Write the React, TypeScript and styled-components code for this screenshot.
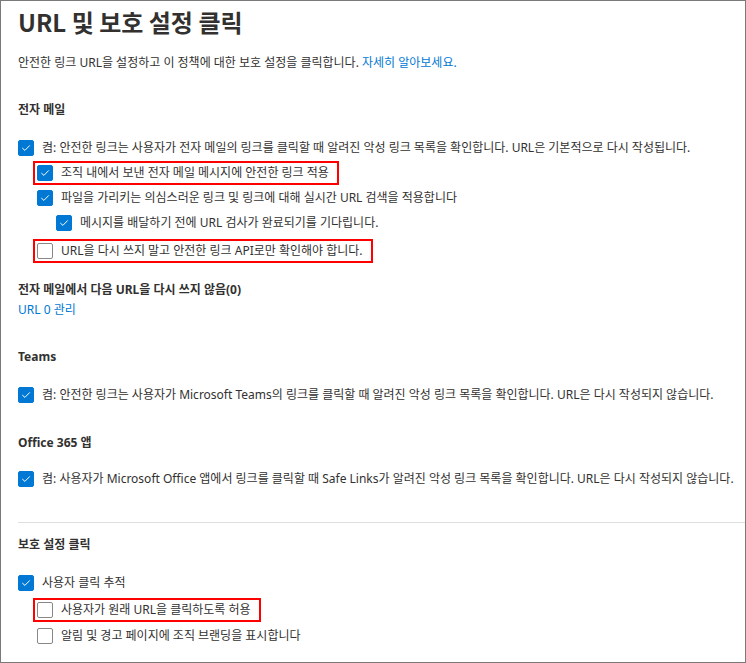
import React from "react";
import styled, { createGlobalStyle } from "styled-components";

const textFont = `"Noto Sans", "Noto Sans CJK KR", sans-serif`;

const GlobalStyle = createGlobalStyle`
  html, body {
    margin: 0;
    padding: 0;
    background: #ffffff;
  }
  body {
    font-family: ${textFont};
    color: #323130;
  }
`;

const Frame = styled.div`
  box-sizing: border-box;
  width: 746px;
  height: 663px;
  border: 1px solid #7a7a7a;
  padding-left: 17px;
  overflow: hidden;
  display: flex;
  flex-direction: column;
`;

const Title = styled.h1`
  margin: 5px 0 0;
  font-family: "Noto Sans CJK KR", sans-serif;
  font-size: 24px;
  line-height: 32px;
  font-weight: 700;
  color: #323130;
`;

const Description = styled.p`
  margin: 15px 0 0;
  font-size: 12px;
  line-height: 20px;
  font-family: ${textFont};
`;

const Link = styled.a`
  color: #0078d4;
  text-decoration: none;
`;

const SectionHeading = styled.h2<{ $mt: number }>`
  margin: ${({ $mt }) => $mt}px 0 0;
  font-family: ${textFont};
  font-size: 12px;
  line-height: 20px;
  font-weight: 700;
  color: #323130;
`;

const ManageLink = styled.a`
  display: block;
  font-family: ${textFont};
  font-size: 12px;
  line-height: 20px;
  color: #0078d4;
  text-decoration: none;
`;

const OptionList = styled.div<{ $mt: number }>`
  margin-top: ${({ $mt }) => $mt}px;
  display: flex;
  flex-direction: column;
  align-items: flex-start;
`;

const Row = styled.div<{ $level: number; $h?: number }>`
  height: ${({ $h }) => $h ?? 25}px;
  display: flex;
  align-items: center;
  padding-left: ${({ $level }) => $level * 19}px;
`;

const Option = styled.label<{ $marked?: boolean }>`
  display: flex;
  align-items: center;
  gap: 8px;
  font-family: ${textFont};
  font-size: 12px;
  line-height: 20px;
  color: #323130;
  white-space: nowrap;
  box-sizing: border-box;
  ${({ $marked }) =>
    $marked
      ? `
    border: 2px solid #ff0000;
    height: 24px;
    margin-left: -4px;
    padding: 0 8px 0 2px;
  `
      : ""}
`;

const Box = styled.span<{ $checked: boolean }>`
  box-sizing: border-box;
  flex: none;
  width: 16px;
  height: 16px;
  border-radius: 2px;
  display: flex;
  align-items: center;
  justify-content: center;
  background: ${({ $checked }) => ($checked ? "#0078d4" : "#ffffff")};
  border: 1px solid ${({ $checked }) => ($checked ? "#0078d4" : "#8a8886")};
`;

const Divider = styled.hr`
  margin: 31px 0 0;
  border: none;
  border-top: 1px solid #e1dfdd;
  height: 0;
`;

function Check({ checked }: { checked: boolean }) {
  return (
    <Box $checked={checked}>
      {checked && (
        <svg width="10" height="10" viewBox="0 0 10 10" fill="none">
          <path
            d="M1.6 5.3 L3.9 7.4 L8.5 2.7"
            stroke="#ffffff"
            strokeWidth="1"
            strokeLinecap="round"
            strokeLinejoin="round"
          />
        </svg>
      )}
    </Box>
  );
}

type Item = {
  level: number;
  checked: boolean;
  text: string;
  marked?: boolean;
  h?: number;
};

function Options({ items, mt }: { items: Item[]; mt: number }) {
  return (
    <OptionList $mt={mt}>
      {items.map((it, i) => (
        <Row key={i} $level={it.level} $h={it.h}>
          <Option $marked={it.marked}>
            <Check checked={it.checked} />
            {it.text}
          </Option>
        </Row>
      ))}
    </OptionList>
  );
}

const emailItems: Item[] = [
  {
    level: 0,
    checked: true,
    text: "켬: 안전한 링크는 사용자가 전자 메일의 링크를 클릭할 때 알려진 악성 링크 목록을 확인합니다. URL은 기본적으로 다시 작성됩니다.",
  },
  { level: 1, checked: true, marked: true, text: "조직 내에서 보낸 전자 메일 메시지에 안전한 링크 적용" },
  { level: 1, checked: true, text: "파일을 가리키는 의심스러운 링크 및 링크에 대해 실시간 URL 검색을 적용합니다" },
  { level: 2, checked: true, text: "메시지를 배달하기 전에 URL 검사가 완료되기를 기다립니다." },
  { level: 1, checked: false, marked: true, h: 31, text: "URL을 다시 쓰지 말고 안전한 링크 API로만 확인해야 합니다." },
];

const clickItems: Item[] = [
  { level: 0, checked: true, h: 26, text: "사용자 클릭 추적" },
  { level: 1, checked: false, marked: true, h: 27, text: "사용자가 원래 URL을 클릭하도록 허용" },
  { level: 1, checked: false, text: "알림 및 경고 페이지에 조직 브랜딩을 표시합니다" },
];

export default function App() {
  return (
    <>
      <GlobalStyle />
      <Frame>
        <Title>URL 및 보호 설정 클릭</Title>
        <Description>
          안전한 링크 URL을 설정하고 이 정책에 대한 보호 설정을 클릭합니다.{" "}
          <Link href="#">자세히 알아보세요.</Link>
        </Description>

        <SectionHeading $mt={27}>전자 메일</SectionHeading>
        <Options items={emailItems} mt={15} />

        <SectionHeading $mt={14}>전자 메일에서 다음 URL을 다시 쓰지 않음(0)</SectionHeading>
        <ManageLink href="#">URL 0 관리</ManageLink>

        <SectionHeading $mt={27}>Teams</SectionHeading>
        <Options
          items={[
            {
              level: 0,
              checked: true,
              text: "켬: 안전한 링크는 사용자가 Microsoft Teams의 링크를 클릭할 때 알려진 악성 링크 목록을 확인합니다. URL은 다시 작성되지 않습니다.",
            },
          ]}
          mt={15}
        />

        <SectionHeading $mt={26}>Office 365 앱</SectionHeading>
        <Options
          items={[
            {
              level: 0,
              checked: true,
              text: "켬: 사용자가 Microsoft Office 앱에서 링크를 클릭할 때 Safe Links가 알려진 악성 링크 목록을 확인합니다. URL은 다시 작성되지 않습니다.",
            },
          ]}
          mt={13}
        />

        <Divider />
        <SectionHeading $mt={12}>보호 설정 클릭</SectionHeading>
        <Options items={clickItems} mt={15} />
      </Frame>
    </>
  );
}
